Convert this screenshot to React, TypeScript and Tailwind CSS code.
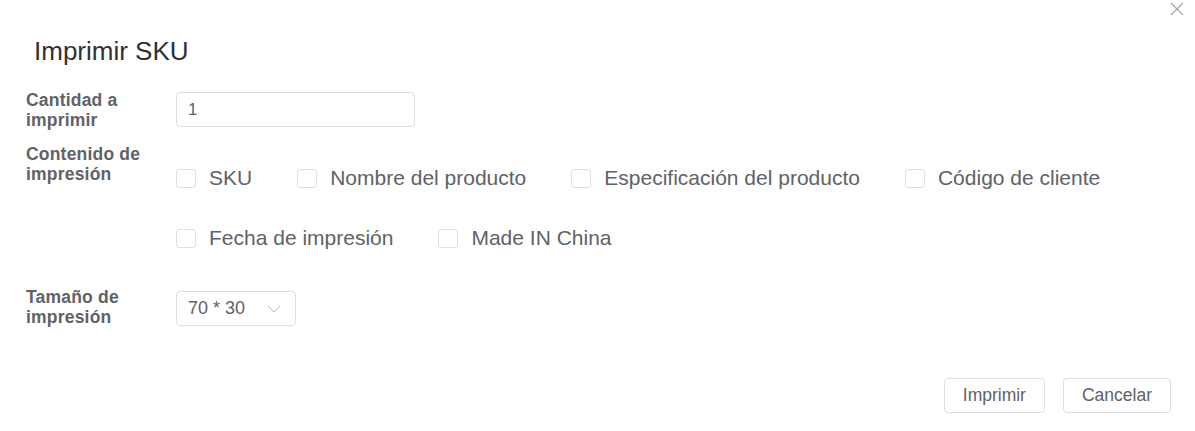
import React from 'react'

const font = { fontFamily: '"Liberation Sans", Arial, sans-serif' }

const Checkbox = ({ label, last }: { label: string; last?: boolean }) => (
  <label className={`flex items-center ${last ? '' : 'mr-[45px]'}`}>
    <span className="block w-[20px] h-[19px] rounded-[3px] border border-[#dcdfe6] bg-white" />
    <span className="ml-[13px] text-[21px] leading-[24px] text-[#606266]">{label}</span>
  </label>
)

const FieldLabel = ({ lines, className = '' }: { lines: string[]; className?: string }) => (
  <div className={`w-[150px] shrink-0 text-[17.5px] leading-[20px] font-bold tracking-[0.2px] text-[#606266] ${className}`}>
    {lines.map((l) => (
      <div key={l}>{l}</div>
    ))}
  </div>
)

export default function App() {
  return (
    <div className="relative w-[1195px] h-[431px] bg-white overflow-hidden" style={font}>
      {/* Close */}
      <button className="absolute top-[2px] right-[11px] w-[14px] h-[14px]">
        <svg width="14" height="14" viewBox="0 0 14 14">
          <path d="M1 1 L13 13 M13 1 L1 13" stroke="#a3a6ad" strokeWidth="1.2" fill="none" />
        </svg>
      </button>

      <h2 className="pt-[36px] pl-[34px] text-[26px] leading-[31px] text-[#303133]">Imprimir SKU</h2>

      <div className="mt-[25px] px-[26px]">
        {/* Cantidad */}
        <div className="flex items-start h-[35px]">
          <FieldLabel lines={['Cantidad a', 'imprimir']} className="mt-[-2px]" />
          <div className="w-[239px] h-[35px] rounded-[4px] border border-[#dcdfe6] pl-[11px] flex items-center text-[17px] text-[#606266]">
            1
          </div>
        </div>

        {/* Contenido */}
        <div className="flex items-start mt-[21px]">
          <FieldLabel lines={['Contenido de', 'impresión']} className="mt-[-4px]" />
          <div className="flex flex-col">
            <div className="flex items-center h-[60px]">
              <Checkbox label="SKU" />
              <Checkbox label="Nombre del producto" />
              <Checkbox label="Especificación del producto" />
              <Checkbox label="Código de cliente" last />
            </div>
            <div className="flex items-center h-[60px]">
              <Checkbox label="Fecha de impresión" />
              <Checkbox label="Made IN China" last />
            </div>
          </div>
        </div>

        {/* Tamaño */}
        <div className="flex items-start h-[35px] mt-[23px]">
          <FieldLabel lines={['Tamaño de', 'impresión']} className="mt-[-4px]" />
          <div className="w-[120px] h-[35px] rounded-[4px] border border-[#dcdfe6] pl-[11px] pr-[14px] flex items-center justify-between text-[18px] text-[#606266]">
            <span>70 * 30</span>
            <svg width="14" height="8" viewBox="0 0 14 8">
              <polyline points="1,1 7,7 13,1" stroke="#b4b7bd" strokeWidth="1" fill="none" />
            </svg>
          </div>
        </div>
      </div>

      <div className="flex justify-end pr-[24px] mt-[52px] gap-[18px]">
        <button className="h-[35px] px-[18px] rounded-[4px] border border-[#dcdfe6] bg-white text-[17.5px] text-[#606266]">
          Imprimir
        </button>
        <button className="h-[35px] px-[18px] rounded-[4px] border border-[#dcdfe6] bg-white text-[17.5px] text-[#606266]">
          Cancelar
        </button>
      </div>
    </div>
  )
}
